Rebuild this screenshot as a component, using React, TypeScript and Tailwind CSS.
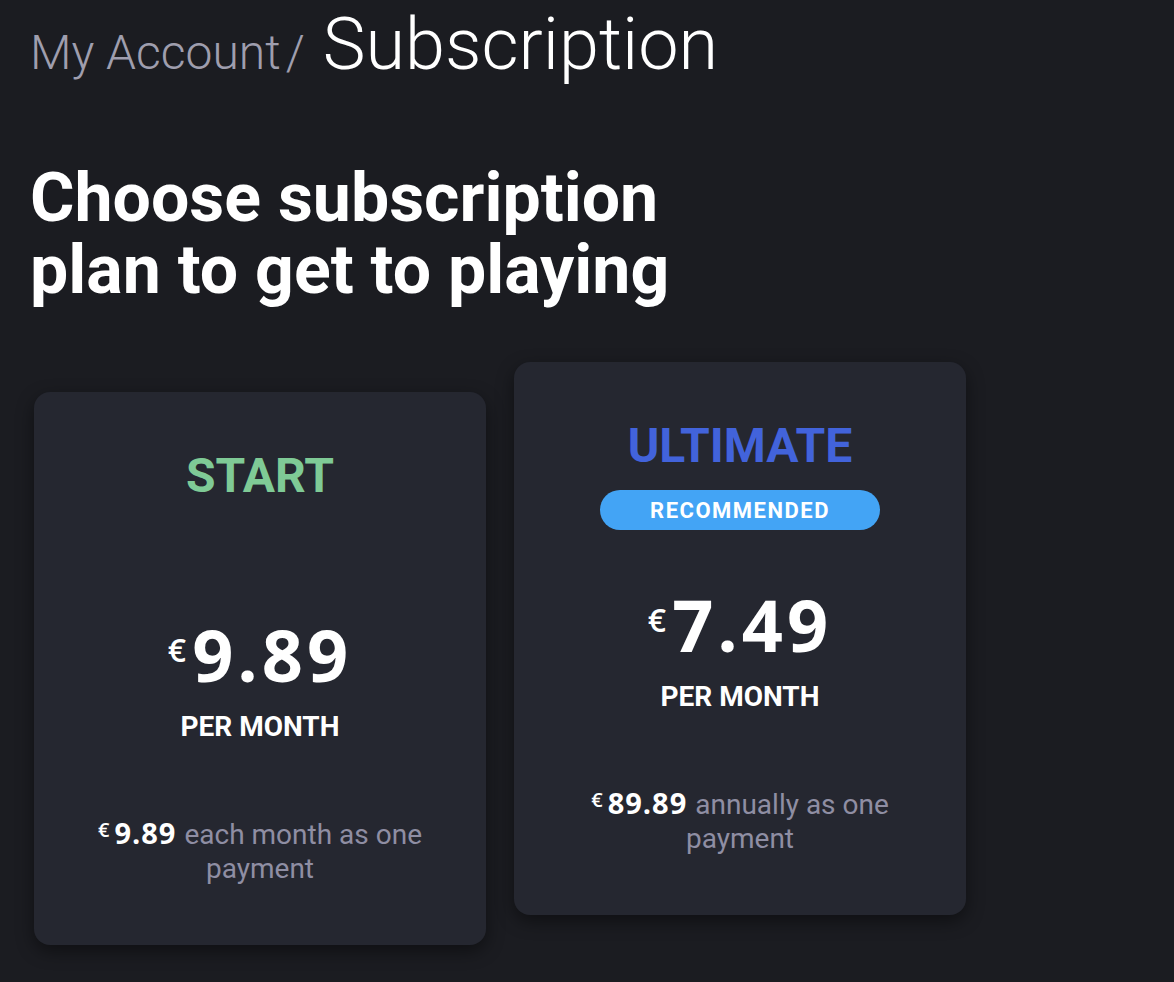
import React from "react";

type Plan = {
  name: string;
  color: string;
  recommended?: boolean;
  price: string;
  total: string;
  note: string;
  offset: string;
};

const plans: Plan[] = [
  {
    name: "START",
    color: "text-[#7fca96]",
    price: "9.89",
    total: "9.89",
    note: "each month as one payment",
    offset: "mt-[30px]",
  },
  {
    name: "ULTIMATE",
    color: "text-[#4263db]",
    recommended: true,
    price: "7.49",
    total: "89.89",
    note: "annually as one payment",
    offset: "mt-0",
  },
];

const roboto = "font-['Roboto','Liberation_Sans',sans-serif]";
const openSans = "font-['Open_Sans','Noto_Sans',sans-serif]";

function PlanCard({ plan }: { plan: Plan }) {
  return (
    <div
      className={`${plan.offset} flex w-[452px] flex-col items-center rounded-[16px] bg-[#252730] px-[44px] pt-[60px] pb-[59px] shadow-[0_6px_18px_rgba(0,0,0,0.45)]`}
    >
      <h2 className={`${roboto} ${plan.color} text-[48px] font-bold leading-none`}>
        {plan.name}
      </h2>
      <div className="mt-[20px] flex h-[40px] items-center justify-center">
        {plan.recommended && (
          <span
            className={`${roboto} flex h-[40px] w-[280px] items-center justify-center rounded-full bg-[#43a4f5] text-[22px] font-bold tracking-[1.5px] text-white`}
          >
            RECOMMENDED
          </span>
        )}
      </div>
      <div className={`${openSans} mt-[58px] flex items-start text-white`}>
        <span className="mt-[16px] mr-[6px] text-[32px] font-semibold leading-none">€</span>
        <span className="text-[72px] font-bold leading-none tracking-[4px]">{plan.price}</span>
      </div>
      <p className={`${roboto} mt-[23px] text-[28px] font-bold leading-none text-white`}>
        PER MONTH
      </p>
      <p
        className={`${roboto} mt-[75px] max-w-[350px] text-center text-[28px] leading-[34px] text-[#8f8ea3]`}
      >
        <span className={`${openSans} mr-[8px] text-white`}>
          <span className="align-[7px] text-[20px] font-semibold leading-[20px]">€</span>
          <span className="ml-[5px] text-[29px] font-bold leading-[28px] tracking-[1px]">
            {plan.total}
          </span>
        </span>
        {plan.note}
      </p>
    </div>
  );
}

export default function App() {
  return (
    <div className="min-h-screen bg-[#1b1c21] pl-[30px] pt-[9px] pb-[40px]">
      <div className={`${roboto} flex items-baseline font-light leading-none`}>
        <span className="text-[48px] text-[#9f9eae]">My Account</span>
        <span className="ml-[5px] text-[48px] text-[#9f9eae]">/</span>
        <span className="ml-[18px] text-[72px] text-white">Subscription</span>
      </div>

      <h1
        className={`${roboto} mt-[81px] w-[720px] text-[68px] font-bold leading-[72px] text-white`}
      >
        Choose subscription
        <br />
        plan to get to playing
      </h1>

      <div className="mt-[56px] ml-[4px] flex items-start gap-[28px]">
        {plans.map((plan) => (
          <PlanCard key={plan.name} plan={plan} />
        ))}
      </div>
    </div>
  );
}
